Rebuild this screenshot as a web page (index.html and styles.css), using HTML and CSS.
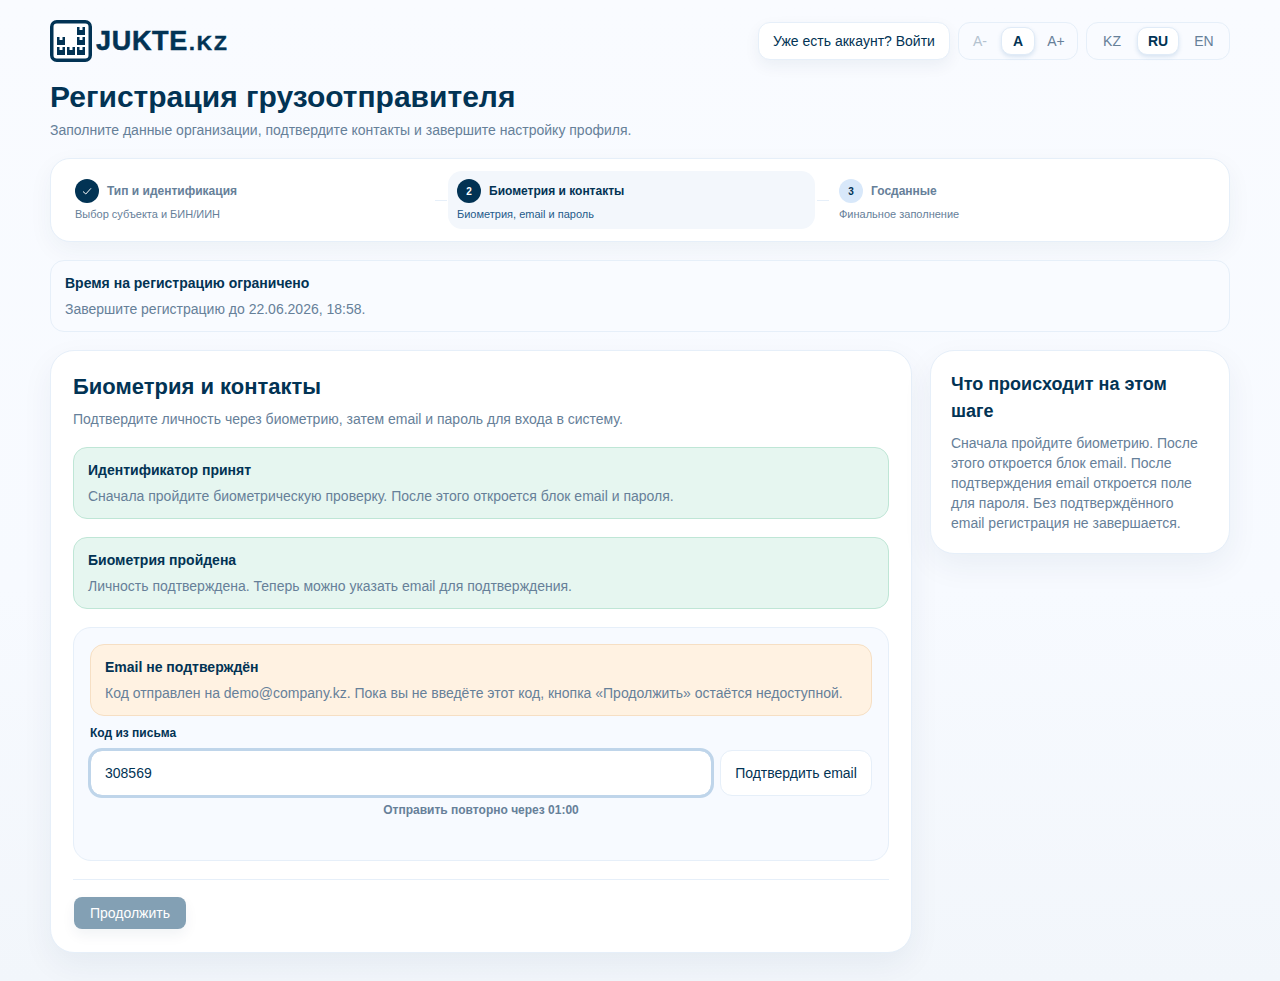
FILE: index.html
```html
<!DOCTYPE html>
<html lang="ru">
  <head>
    <meta charset="utf-8">
    <title>Регистрация грузоотправителя</title>
    <meta name="viewport" content="width=device-width, initial-scale=1">
    <link rel="stylesheet" href="styles.css">
  </head>
  <body>
    <main class="page">
      <header class="top">
        <a class="logo">
          <svg class="logo-icon" viewBox="0 0 42 42" width="42" height="42">
            <rect x="1.750" y="1.750" width="38.500" height="38.500" rx="5" fill="#fff" stroke="#023354" stroke-width="3.500"/>
            <path fill="#023354" d="M7 17h2.500v3h3v-3H15v8H7zM7 27h2.500v3h3v-3H15v8H7zM17 27h2.500v3h3v-3H25v8h-8zM27 27h2.500v3h3v-3H35v8h-8zM27 17h2.500v3h3v-3H35v8h-8zM27 7h2.500v3h3V7H35v8h-8z"/>
          </svg>
          <span class="logo-name">JUKTE<small>.KZ</small></span>
        </a>
        <div class="top-actions">
          <button class="login">Уже есть аккаунт? Войти</button>
          <div class="switch fonts">
            <span class="off">A-</span>
            <span class="on">A</span>
            <span>A+</span>
          </div>
          <div class="switch langs">
            <span>KZ</span>
            <span class="on">RU</span>
            <span>EN</span>
          </div>
        </div>
      </header>

      <h1>Регистрация грузоотправителя</h1>
      <p class="lead">Заполните данные организации, подтвердите контакты и завершите настройку профиля.</p>

      <section class="steps">
        <div class="step done">
          <div class="step-head">
            <span class="num">
              <svg viewBox="0 0 12 12" width="12" height="12"><path d="M2 6.500l2.800 2.500L10 3.300" fill="none" stroke="#fff" stroke-width="1"/></svg>
            </span>
            <b>Тип и идентификация</b>
          </div>
          <small>Выбор субъекта и БИН/ИИН</small>
        </div>
        <i class="line"></i>
        <div class="step current">
          <div class="step-head"><span class="num">2</span><b>Биометрия и контакты</b></div>
          <small>Биометрия, email и пароль</small>
        </div>
        <i class="line"></i>
        <div class="step">
          <div class="step-head"><span class="num">3</span><b>Госданные</b></div>
          <small>Финальное заполнение</small>
        </div>
      </section>

      <section class="note timer">
        <strong>Время на регистрацию ограничено</strong>
        <p>Завершите регистрацию до 22.06.2026, 18:58.</p>
      </section>

      <div class="columns">
        <section class="card main-card">
          <h2>Биометрия и контакты</h2>
          <p class="card-lead">Подтвердите личность через биометрию, затем email и пароль для входа в систему.</p>

          <div class="note ok">
            <strong>Идентификатор принят</strong>
            <p>Сначала пройдите биометрическую проверку. После этого откроется блок email и пароля.</p>
          </div>
          <div class="note ok">
            <strong>Биометрия пройдена</strong>
            <p>Личность подтверждена. Теперь можно указать email для подтверждения.</p>
          </div>

          <div class="email-box">
            <div class="note warn">
              <strong>Email не подтверждён</strong>
              <p>Код отправлен на demo@company.kz. Пока вы не введёте этот код, кнопка «Продолжить» остаётся недоступной.</p>
            </div>
            <label class="field-label" for="code">Код из письма</label>
            <div class="code-row">
              <input id="code" type="text" value="308569">
              <button class="confirm">Подтвердить email</button>
            </div>
            <div class="resend">Отправить повторно через 01:00</div>
          </div>

          <div class="card-foot">
            <button class="next">Продолжить</button>
          </div>
        </section>

        <aside class="card side-card">
          <h3>Что происходит на этом шаге</h3>
          <p>Сначала пройдите биометрию. После этого откроется блок email. После подтверждения email откроется поле для пароля. Без подтверждённого email регистрация не завершается.</p>
        </aside>
      </div>
    </main>
  </body>
</html>
```
FILE: styles.css
```css
* {
  box-sizing: border-box;
}
html, body {
  margin: 0;
  height: 981px;
}
body {
  background: linear-gradient(180deg, #f9fbff 0%, #f7faff 60%, #f2f6fb 100%);
  color: #023354;
  font-family: "Liberation Sans", Arial, sans-serif;
  overflow: hidden;
}
button, input {
  font-family: inherit;
  color: inherit;
}
.page {
  width: 1180px;
  margin: 0 auto;
  padding-top: 20px;
}

.top {
  display: flex;
  justify-content: space-between;
  align-items: center;
  height: 42px;
}
.logo {
  display: flex;
  align-items: center;
  gap: 4px;
}
.logo-icon {
  display: block;
}
.logo-name {
  font-size: 27px;
  font-weight: 700;
  letter-spacing: .7px;
  -webkit-text-stroke: .5px #023354;
}
.logo-name small {
  margin-left: 1px;
  font-size: 21px;
  letter-spacing: 2px;
}
.top-actions {
  display: flex;
  gap: 8px;
}
.login {
  height: 38px;
  width: 192px;
  padding: 0;
  background: #fff;
  border: 1px solid #e6eff9;
  border-radius: 12px;
  font-size: 14px;
  box-shadow: 0 6px 16px rgba(2, 51, 84, .06);
}
.switch {
  display: flex;
  align-items: center;
  justify-content: space-between;
  height: 38px;
  padding: 0 4px;
  background: #f9fbff;
  border: 1px solid #e6eff9;
  border-radius: 12px;
  font-size: 14px;
  color: #668099;
}
.switch span {
  display: flex;
  align-items: center;
  justify-content: center;
  height: 28px;
  border-radius: 10px;
}
.switch .on {
  background: #fff;
  color: #023354;
  font-weight: 700;
  border: 1px solid #e0ebf7;
  box-shadow: 0 2px 4px rgba(60, 120, 180, .18);
}
.switch .off {
  color: #b4c2cf;
}
.fonts {
  width: 120px;
}
.fonts span {
  width: 34px;
}
.langs {
  width: 144px;
}
.langs span {
  width: 42px;
}

h1 {
  margin: 17px 0 0;
  font-size: 30px;
  line-height: 36px;
  font-weight: 700;
}
.lead {
  margin: 5px 0 0;
  font-size: 14px;
  line-height: 20px;
  color: #668099;
}

.steps {
  display: flex;
  align-items: center;
  height: 84px;
  margin-top: 18px;
  padding-left: 15px;
  background: #fff;
  border: 1px solid #e6eff9;
  border-radius: 20px;
  box-shadow: 0 8px 24px rgba(2, 51, 84, .05);
}
.step {
  flex: 0 0 367px;
  height: 58px;
  padding: 8px 9px;
  border-radius: 14px;
}
.step.current {
  background: #f3f7fc;
}
.step-head {
  display: flex;
  align-items: center;
  gap: 8px;
  height: 24px;
}
.step-head b {
  font-size: 12px;
  color: #668099;
}
.step small {
  display: block;
  margin-top: 4px;
  font-size: 11px;
  line-height: 14px;
  color: #668099;
}
.num {
  display: flex;
  align-items: center;
  justify-content: center;
  width: 24px;
  height: 24px;
  border-radius: 50%;
  background: #d8e8fa;
  color: #023354;
  font-size: 10px;
  font-weight: 700;
}
.done .num, .current .num {
  background: #023354;
  color: #fff;
}
.current .step-head b {
  color: #023354;
}
.current small {
  color: #245a8a;
}
.line {
  flex: 0 0 12px;
  height: 1px;
  margin: 0 1px 0 2px;
  background: #e6eff9;
}

.note {
  height: 72px;
  padding: 12px 14px;
  border: 1px solid #e6eff9;
  border-radius: 14px;
  font-size: 14px;
  line-height: 20px;
}
.note strong {
  display: block;
}
.note p {
  margin: 6px 0 0;
  color: #668099;
}
.timer {
  margin-top: 18px;
  background: #f9fbff;
}
.ok {
  margin-bottom: 18px;
  background: #e6f6f0;
  border-color: #bfe6d6;
}
.warn {
  background: #fff2e2;
  border-color: #f6dfc4;
}

.columns {
  display: flex;
  align-items: flex-start;
  gap: 18px;
  margin-top: 18px;
}
.card {
  background: #fff;
  border: 1px solid #e6eff9;
  border-radius: 24px;
  box-shadow: 0 12px 32px rgba(2, 51, 84, .06);
}
.main-card {
  width: 862px;
  height: 603px;
  padding: 22px 22px 0;
}
h2 {
  margin: 0;
  font-size: 22px;
  line-height: 28px;
}
.card-lead {
  margin: 8px 0 0;
  font-size: 14px;
  line-height: 20px;
  color: #668099;
}
.main-card .ok:first-of-type {
  margin-top: 18px;
}
.email-box {
  height: 234px;
  padding: 16px;
  background: #f7faff;
  border: 1px solid #e6eff9;
  border-radius: 18px;
}
.field-label {
  display: block;
  margin-top: 10px;
  font-size: 12px;
  line-height: 14px;
  font-weight: 700;
}
.code-row {
  display: flex;
  gap: 8px;
  margin-top: 10px;
}
.code-row input {
  flex: 1;
  min-width: 0;
  height: 46px;
  padding: 0 14px;
  background: #fff;
  border: 1px solid #bfd5ea;
  border-radius: 12px;
  outline: 3px solid #bfd5ea;
  outline-offset: -1px;
  font-size: 14px;
}
.confirm {
  flex: 0 0 152px;
  height: 46px;
  padding: 0;
  background: #fff;
  border: 1px solid #e6eff9;
  border-radius: 12px;
  font-size: 14px;
}
.resend {
  margin-top: 7px;
  font-size: 12px;
  line-height: 14px;
  font-weight: 700;
  text-align: center;
  color: #668099;
}
.card-foot {
  margin-top: 18px;
  padding-top: 17px;
  border-top: 1px solid #e6eff9;
}
.next {
  display: block;
  width: 112px;
  height: 32px;
  margin-left: 1px;
  padding: 0;
  background: #83a0b4;
  border: 0;
  border-radius: 8px;
  color: #fff;
  font-size: 14px;
  box-shadow: 0 6px 14px rgba(2, 51, 84, .06);
}

.side-card {
  width: 300px;
  height: 204px;
  padding: 20px 20px;
}
h3 {
  margin: 0;
  font-size: 18px;
  line-height: 27px;
}
.side-card p {
  margin: 8px 0 0;
  font-size: 14px;
  line-height: 20px;
  color: #668099;
}
```
